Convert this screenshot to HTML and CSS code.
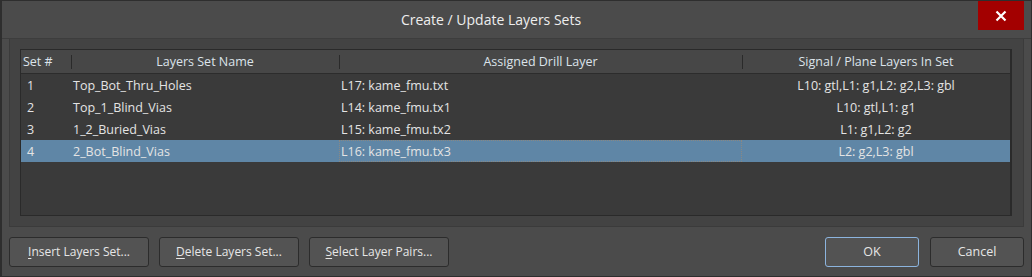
FILE: index.html
```html
<!DOCTYPE html>
<html lang="en">
<head>
    <meta charset="UTF-8" />
    <title>Create / Update Layers Sets</title>
    <link rel="stylesheet" href="styles.css">
</head>
<body>
    <div class="window">
        <div class="titlebar">
            <div class="title">Create / Update Layers Sets</div>
            <button class="close" aria-label="Close">
                <svg width="12" height="12" viewBox="0 0 12 12">
                    <path d="M1.5 1.5 L10.5 10.5 M10.5 1.5 L1.5 10.5" stroke="#fff" stroke-width="2.2"/>
                </svg>
            </button>
        </div>

        <div class="panel">
            <div class="grid">
                <div class="row head">
                    <div class="cell c-set">Set #</div>
                    <div class="cell c-name">Layers Set Name</div>
                    <div class="cell c-drill">Assigned Drill Layer</div>
                    <div class="cell c-sig">Signal / Plane Layers In Set</div>
                </div>
                <div class="row">
                    <div class="cell c-set">1</div>
                    <div class="cell c-name">Top_Bot_Thru_Holes</div>
                    <div class="cell c-drill">L17: kame_fmu.txt</div>
                    <div class="cell c-sig">L10: gtl,L1: g1,L2: g2,L3: gbl</div>
                </div>
                <div class="row">
                    <div class="cell c-set">2</div>
                    <div class="cell c-name">Top_1_Blind_Vias</div>
                    <div class="cell c-drill">L14: kame_fmu.tx1</div>
                    <div class="cell c-sig">L10: gtl,L1: g1</div>
                </div>
                <div class="row">
                    <div class="cell c-set">3</div>
                    <div class="cell c-name">1_2_Buried_Vias</div>
                    <div class="cell c-drill">L15: kame_fmu.tx2</div>
                    <div class="cell c-sig">L1: g1,L2: g2</div>
                </div>
                <div class="row selected">
                    <div class="cell c-set">4</div>
                    <div class="cell c-name">2_Bot_Blind_Vias</div>
                    <div class="cell c-drill focus">L16: kame_fmu.tx3</div>
                    <div class="cell c-sig">L2: g2,L3: gbl</div>
                </div>
            </div>
        </div>

        <div class="footer">
            <button class="btn wide"><u>I</u>nsert Layers Set...</button>
            <button class="btn wide"><u>D</u>elete Layers Set...</button>
            <button class="btn wide"><u>S</u>elect Layer Pairs...</button>
            <div class="spacer"></div>
            <button class="btn small default">OK</button>
            <button class="btn small">Cancel</button>
        </div>
    </div>
</body>
</html>
```

FILE: styles.css
```css
body {
    margin: 0;
    font-family: "Open Sans", "Noto Sans", sans-serif;
    font-size: 12.5px;
    color: #e4e4e4;
    background: #2d2d2d;
}

.window {
    width: 1032px;
    height: 277px;
    box-sizing: border-box;
    border: 1px solid #2e2e2e;
    border-left-width: 2px;
    background: #4b4b4b;
    display: flex;
    flex-direction: column;
}

.titlebar {
    height: 37px;
    border-bottom: 1px solid #3d3d3d;
    display: flex;
    align-items: flex-start;
}

.title {
    flex: 1;
    text-align: center;
    font-size: 14px;
    color: #eeeeee;
    line-height: 37px;
    padding-left: 2px;
}

.close {
    width: 46px;
    height: 29px;
    margin-right: 7px;
    border: none;
    padding: 0;
    background: #a30000;
    display: flex;
    align-items: center;
    justify-content: center;
}

.panel {
    margin: 0 7px 0 7px;
    height: 188px;
    box-sizing: border-box;
    border: 1px solid #3b3b3b;
    border-top: none;
    background: #434343;
    padding: 10px 11px 10px 10px;
}

.grid {
    height: 100%;
    box-sizing: border-box;
    border: 1px solid #2a2a2a;
    border-right-width: 2px;
    background: #3a3a3a;
}

.row {
    display: flex;
    height: 22px;
    align-items: center;
}

.row.head {
    height: 23px;
    background: #474747;
    border-bottom: 1px solid #2c2c2c;
    color: #dce3ea;
}

.row.selected {
    background: #5f86a6;
}

.cell {
    box-sizing: border-box;
    height: 100%;
    display: flex;
    align-items: center;
    white-space: nowrap;
}

.c-set { width: 50px; padding-left: 6px; }
.c-name { width: 268px; padding-left: 2px; }
.c-drill { width: 403px; padding-left: 2px; }
.c-sig { flex: 1; justify-content: center; }

.head .cell { padding-left: 0; justify-content: center; position: relative; }
.head .c-set { justify-content: flex-start; padding-left: 2px; }

.head .c-name::before,
.head .c-drill::before,
.head .c-sig::before {
    content: "";
    position: absolute;
    left: 0;
    top: 5px;
    bottom: 4px;
    border-left: 1px solid #2a2a2a;
}

.focus {
    outline: 1px dotted rgba(190, 140, 90, 0.45);
    outline-offset: -1px;
}

.footer {
    flex: 1;
    display: flex;
    align-items: flex-start;
    gap: 10px;
    padding: 10px 7px 0 7px;
}

.spacer { flex: 1; }

.btn {
    height: 30px;
    box-sizing: border-box;
    border: 1px solid #2c2c2c;
    border-radius: 3px;
    background: #535353;
    color: #e6e6e6;
    font-family: inherit;
    font-size: 12px;
    padding: 0 0 2px 0;
}

.btn u { text-underline-offset: 2px; }

.wide { width: 140px; }
.small { width: 94px; font-size: 12.5px; }
.btn.small + .btn.small { margin-left: 1px; }

.default {
    border-color: #8cb4de;
}
```
